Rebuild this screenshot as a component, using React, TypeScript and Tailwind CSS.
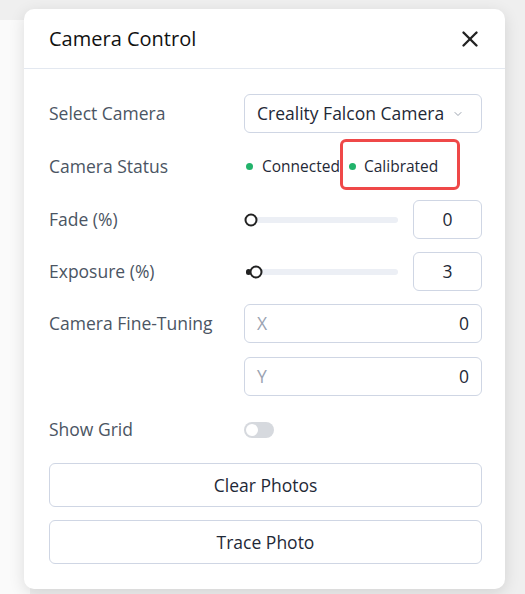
import { X, ChevronDown } from 'lucide-react';

function Row({ label, className = '', children }: { label: string; className?: string; children: React.ReactNode }) {
  return (
    <div className={`grid grid-cols-[195px_1fr] items-center min-h-[39px] ${className}`}>
      <span className="text-[17.5px] text-[#4b5563] whitespace-nowrap">{label}</span>
      <div className="min-w-0">{children}</div>
    </div>
  );
}

function SliderField({ value, pct }: { value: string; pct: number }) {
  return (
    <div className="flex items-center gap-[15px]">
      <div className="relative flex-1 h-[6px] ml-[2px] rounded-full bg-[#eceff5]">
        <div className="absolute left-0 top-0 h-full rounded-full bg-[#222]" style={{ width: `${pct}%` }} />
        <div
          className="absolute top-1/2 -translate-y-1/2 -translate-x-1/2 w-[13px] h-[13px] rounded-full border-[2.5px] border-[#222] bg-white"
          style={{ left: `calc(${pct}% + 5px)` }}
        />
      </div>
      <div className="w-[69px] h-[39px] flex items-center justify-center rounded-[6px] border border-[#cfd6e4] text-[17.5px] text-[#1f2937]">
        {value}
      </div>
    </div>
  );
}

function AxisInput({ axis }: { axis: string }) {
  return (
    <div className="h-[39px] flex items-center justify-between pl-[12px] pr-[12px] rounded-[6px] border border-[#cfd6e4] text-[17.5px]">
      <span className="text-[#9aa3b2]">{axis}</span>
      <span className="text-[#1f2937]">0</span>
    </div>
  );
}

export default function App() {
  return (
    <div className="relative w-[525px] h-[594px] overflow-hidden bg-[#efefef] font-['Open_Sans',sans-serif]">
      <div className="absolute left-0 top-[20px] w-[30px] h-[574px] bg-[#fafafa]" />
      <div className="relative ml-[24px] mt-[9px] w-[481px] h-[580px] rounded-[10px] bg-white shadow-[0_4px_16px_rgba(0,0,0,0.12)]">
        <div className="h-[60px] flex items-center justify-between pl-[25px] pr-[22px] border-b border-[#e3e8f0]">
          <h2 className="text-[20px] text-[#111] leading-none">Camera Control</h2>
          <X className="w-[26px] h-[26px] text-[#222]" strokeWidth={2.2} />
        </div>
        <div className="flex flex-col gap-[13px] pl-[25px] pr-[23px] pt-[25px] pb-[25px]">
          <Row label="Select Camera">
            <div className="h-[39px] flex items-center justify-between pl-[12px] pr-[17px] rounded-[6px] border border-[#cfd6e4]">
              <span className="text-[17.5px] text-[#1f2937] whitespace-nowrap">Creality Falcon Camera</span>
              <ChevronDown className="w-[12px] h-[12px] text-[#9ca3af]" />
            </div>
          </Row>
          <Row label="Camera Status" className="mt-[1px]">
            <div className="relative flex items-center text-[15.5px] text-[#1f2937]">
              <span className="w-[7px] h-[7px] ml-[2px] rounded-full bg-[#22b36b]" />
              <span className="ml-[9px]">Connected</span>
              <span className="w-[7px] h-[7px] ml-[9px] rounded-full bg-[#22b36b]" />
              <span className="ml-[8px]">Calibrated</span>
              <div className="absolute left-[96px] top-[-16px] w-[120px] h-[51px] rounded-[6px] border-[3px] border-[#ef4848]" />
            </div>
          </Row>
          <Row label="Fade (%)" className="mt-[1px]">
            <SliderField value="0" pct={0} />
          </Row>
          <Row label="Exposure (%)">
            <SliderField value="3" pct={3} />
          </Row>
          <Row label="Camera Fine-Tuning">
            <AxisInput axis="X" />
          </Row>
          <Row label="" className="mt-[1px]">
            <AxisInput axis="Y" />
          </Row>
          <Row label="Show Grid" className="mt-[1px]">
            <div className="relative w-[30px] h-[16px] rounded-full bg-[#d6d9de]">
              <div className="absolute left-[2px] top-[2px] w-[12px] h-[12px] rounded-full bg-white" />
            </div>
          </Row>
          <button className="mt-[1px] h-[44px] rounded-[6px] border border-[#cfd6e4] text-[17.5px] text-[#1f2937]">Clear Photos</button>
          <button className="h-[44px] rounded-[6px] border border-[#cfd6e4] text-[17.5px] text-[#1f2937]">Trace Photo</button>
        </div>
      </div>
    </div>
  );
}
